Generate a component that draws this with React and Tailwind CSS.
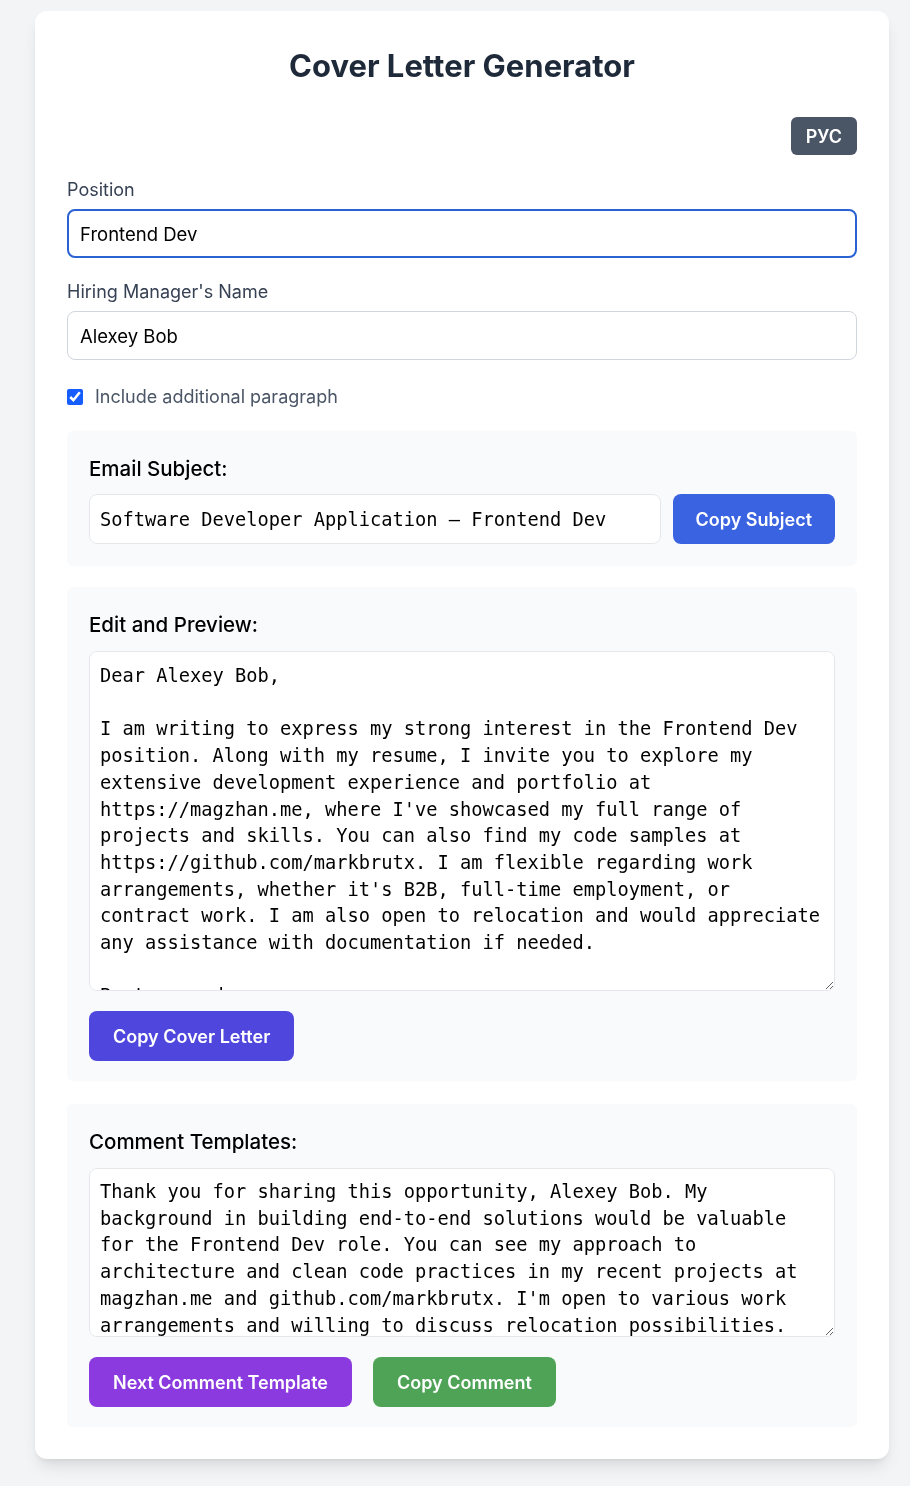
import React, { useState } from 'react';

const LETTER = `Dear Alexey Bob,

I am writing to express my strong interest in the Frontend Dev position. Along with my resume, I invite you to explore my extensive development experience and portfolio at https://magzhan.me, where I've showcased my full range of projects and skills. You can also find my code samples at https://github.com/markbrutx. I am flexible regarding work arrangements, whether it's B2B, full-time employment, or contract work. I am also open to relocation and would appreciate any assistance with documentation if needed.

Best regards,
Magzhan`;

const COMMENT = `Thank you for sharing this opportunity, Alexey Bob. My background in building end-to-end solutions would be valuable for the Frontend Dev role. You can see my approach to architecture and clean code practices in my recent projects at magzhan.me and github.com/markbrutx. I'm open to various work arrangements and willing to discuss relocation possibilities.`;

const mono = "font-['DejaVu_Sans_Mono',monospace] text-[18.7px] leading-[26.7px] text-black";

export default function App() {
  const [position, setPosition] = useState('Frontend Dev');
  const [manager, setManager] = useState('Alexey Bob');
  const [extra, setExtra] = useState(true);

  return (
    <div className="min-h-screen bg-gray-100 font-['Inter',sans-serif] pt-[11px] pb-[27px]">
      <div className="ml-[35px] w-[854px] bg-white rounded-xl shadow-lg p-8">
        {/* Title */}
        <h1 className="text-[31px] leading-[45px] font-bold text-gray-800 text-center">
          Cover Letter Generator
        </h1>

        <div className="flex justify-end mt-[29px]">
          <button className="bg-gray-600 text-white font-semibold text-[18px] h-[38px] px-[15px] rounded-md">
            РУС
          </button>
        </div>

        {/* Fields */}
        <div className="mt-[23px]">
          <label className="block text-[18px] leading-[24px] text-gray-700 mb-[7px]">Position</label>
          <input
            value={position}
            onChange={(e) => setPosition(e.target.value)}
            className="w-full h-[49px] px-[11px] text-[18.5px] text-black border-2 border-[#2a62d4] rounded-lg outline-none"
          />
        </div>
        <div className="mt-[22px]">
          <label className="block text-[18px] leading-[24px] text-gray-700 mb-[7px]">Hiring Manager's Name</label>
          <input
            value={manager}
            onChange={(e) => setManager(e.target.value)}
            className="w-full h-[49px] px-[12px] text-[18.5px] text-black border border-gray-300 rounded-lg outline-none"
          />
        </div>
        <label className="flex items-center gap-[12px] mt-[23px] text-[18px] text-gray-600">
          <input
            type="checkbox"
            checked={extra}
            onChange={(e) => setExtra(e.target.checked)}
            className="w-4 h-4 accent-blue-600"
          />
          Include additional paragraph
        </label>

        {/* Email subject */}
        <section className="bg-gray-50 rounded-md px-[22px] pt-[24px] pb-[22px] mt-[21px]">
          <h2 className="text-[20.5px] leading-[28px] font-medium text-black mb-[11px]">Email Subject:</h2>
          <div className="flex gap-3">
            <input
              readOnly
              value={`Software Developer Application – ${position}`}
              className={`flex-1 h-[50px] px-[10px] bg-white border border-gray-200 rounded-lg outline-none ${mono}`}
            />
            <button className="bg-[#3a63e2] text-white font-semibold text-[18px] h-[50px] px-[23px] rounded-lg">
              Copy Subject
            </button>
          </div>
        </section>

        {/* Letter */}
        <section className="bg-gray-50 rounded-md px-[22px] pt-[24px] pb-[20px] mt-[21px]">
          <h2 className="text-[20.5px] leading-[28px] font-medium text-black mb-[12px]">Edit and Preview:</h2>
          <textarea
            defaultValue={LETTER}
            className={`block w-full h-[340px] px-[10px] pt-[11px] pb-[9px] bg-white border border-gray-200 rounded-lg outline-none [scrollbar-width:none] ${mono}`}
          />
          <button className="mt-[20px] bg-[#4f46dd] text-white font-semibold text-[18px] h-[50px] px-[24px] rounded-lg">
            Copy Cover Letter
          </button>
        </section>

        {/* Comments */}
        <section className="bg-gray-50 rounded-md px-[22px] pt-[24px] pb-[20px] mt-[23px]">
          <h2 className="text-[20.5px] leading-[28px] font-medium text-black mb-[12px]">Comment Templates:</h2>
          <textarea
            defaultValue={COMMENT}
            className={`block w-full h-[169px] px-[10px] pt-[10px] pb-[9px] bg-white border border-gray-200 rounded-lg outline-none [scrollbar-width:none] ${mono}`}
          />
          <div className="flex gap-[21px] mt-[20px]">
            <button className="bg-[#8a3ade] text-white font-semibold text-[18px] h-[50px] px-[24px] rounded-lg">
              Next Comment Template
            </button>
            <button className="bg-[#4ea356] text-white font-semibold text-[18px] h-[50px] px-[24px] rounded-lg">
              Copy Comment
            </button>
          </div>
        </section>
      </div>
    </div>
  );
}
